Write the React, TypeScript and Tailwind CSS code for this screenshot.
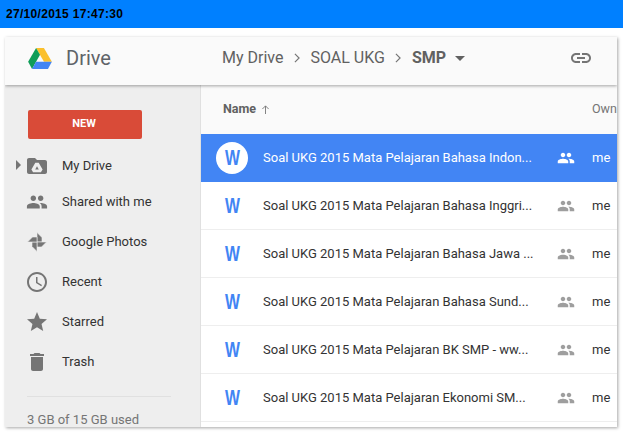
const ROBOTO = "font-['Roboto',sans-serif]";

const P = {
  people: "M16 11c1.66 0 2.99-1.34 2.99-3S17.66 5 16 5c-1.66 0-3 1.34-3 3s1.34 3 3 3zm-8 0c1.66 0 2.99-1.34 2.99-3S9.66 5 8 5C6.34 5 5 6.34 5 8s1.34 3 3 3zm0 2c-2.33 0-7 1.17-7 3.5V19h14v-2.5c0-2.33-4.67-3.5-7-3.5zm8 0c-.29 0-.62.02-.97.05 1.16.84 1.97 1.97 1.97 3.45V19h6v-2.5c0-2.33-4.67-3.5-7-3.5z",
  star: "M12 17.27L18.18 21l-1.64-7.03L22 9.24l-7.19-.61L12 2 9.19 8.63 2 9.24l5.46 4.73L5.82 21z",
  trash: "M6 19c0 1.1.9 2 2 2h8c1.1 0 2-.9 2-2V7H6v12zM19 4h-3.5l-1-1h-5l-1 1H5v2h14V4z",
  link: "M3.9 12c0-1.71 1.39-3.1 3.1-3.1h4V7H7c-2.76 0-5 2.24-5 5s2.24 5 5 5h4v-1.9H7c-1.71 0-3.1-1.39-3.1-3.1zM8 13h8v-2H8v2zm9-6h-4v1.9h4c1.71 0 3.1 1.39 3.1 3.1s-1.39 3.1-3.1 3.1h-4V17h4c2.76 0 5-2.24 5-5s-2.24-5-5-5z",
  clock: "M11.99 2C6.47 2 2 6.48 2 12s4.47 10 9.99 10C17.52 22 22 17.52 22 12S17.52 2 11.99 2zM12 20c-4.42 0-8-3.58-8-8s3.58-8 8-8 8 3.58 8 8-3.58 8-8 8zm.5-13H11v6l5.25 3.15.75-1.23-4.5-2.67z",
  folder: "M10 4H4c-1.1 0-2 .9-2 2v12c0 1.1.9 2 2 2h16c1.1 0 2-.9 2-2V8c0-1.1-.9-2-2-2h-8l-2-2z",
};

function Icon({ d, className }: { d: string; className: string }) {
  return (
    <svg viewBox="0 0 24 24" className={className} fill="currentColor">
      <path d={d} />
    </svg>
  );
}

function DriveLogo() {
  return (
    <svg viewBox="0 0 26 23" className="h-[21px] w-[24px]">
      <path d="M8.7 0h8.6l8.7 15h-8.600z" fill="#fbc02d" />
      <path d="M8.7 0l4.300 7.500L4.300 23 0 15z" fill="#0f9d58" />
      <path d="M8.600 15H26l-4.300 8H4.300z" fill="#4285f4" />
    </svg>
  );
}

function MyDriveIcon() {
  return (
    <svg viewBox="0 0 24 24" className="h-6 w-6 text-[#757575]">
      <path d={P.folder} fill="currentColor" />
      <path
        fillRule="evenodd"
        d="M10.300 8.800h3.400l3.900 6.600-1.700 2.800H8.100l-1.700-2.800zM12 12.200l-1.800 3.200h3.600z"
        fill="#eeeeee"
      />
    </svg>
  );
}

function PhotosIcon() {
  return (
    <svg viewBox="0 0 24 24" className="h-6 w-6 text-[#757575]" fill="currentColor" stroke="#eeeeee" strokeWidth="0.6">
      <path d="M12 12V2.500l5 5V12z" />
      <path d="M12 12h9.500l-5 5H12z" />
      <path d="M12 12v9.500l-5-5V12z" />
      <path d="M12 12H2.500l5-5H12z" />
    </svg>
  );
}

const nav = [
  { label: "Shared with me", icon: <span className="flex h-6 w-6 items-center justify-center"><Icon d={P.people} className="h-[22px] w-[22px] text-[#757575]" /></span> },
  { label: "Google Photos", icon: <PhotosIcon /> },
  { label: "Recent", icon: <Icon d={P.clock} className="h-6 w-6 text-[#757575]" /> },
  { label: "Starred", icon: <Icon d={P.star} className="h-6 w-6 text-[#757575]" /> },
  { label: "Trash", icon: <Icon d={P.trash} className="h-6 w-6 text-[#757575]" /> },
];

const rows = [
  "Soal UKG 2015 Mata Pelajaran Bahasa Indon...",
  "Soal UKG 2015 Mata Pelajaran Bahasa Inggri...",
  "Soal UKG 2015 Mata Pelajaran Bahasa Jawa ...",
  "Soal UKG 2015 Mata Pelajaran Bahasa Sund...",
  "Soal UKG 2015 Mata Pelajaran BK SMP - ww...",
  "Soal UKG 2015 Mata Pelajaran Ekonomi SM...",
];

function Chevron() {
  return (
    <svg viewBox="0 0 8 12" className="mx-[9.500px] h-[10px] w-[8px] text-[#757575]" fill="none" stroke="currentColor" strokeWidth="1.4">
      <path d="M1.500 1l5 5-5 5" />
    </svg>
  );
}

export default function App() {
  return (
    <div className="h-[433px] w-[623px] overflow-hidden bg-white">
      <div className="flex h-[28px] items-center bg-[#0080ff] pl-[6px] font-['Liberation_Sans',sans-serif] text-[12px] font-bold tracking-[0.3px] text-black">
        27/10/2015 17:47:30
      </div>
      <div className={`ml-[5px] mt-[9px] flex h-[390px] w-[612px] flex-col overflow-hidden bg-white shadow-[1px_1px_3px_rgba(0,0,0,0.35)] ${ROBOTO}`}>
        <header className="relative z-10 flex h-[48px] shrink-0 items-center bg-[#fafafa] pb-[6px] shadow-[0_1px_3px_rgba(0,0,0,0.35)]">
          <div className="flex w-[217px] shrink-0 items-center pl-[23px]">
            <DriveLogo />
            <span className="ml-[14px] text-[20px] text-[#5f6368]">Drive</span>
          </div>
          <div className="flex items-center text-[16px] text-[#616161]">
            <span>My Drive</span>
            <Chevron />
            <span>SOAL UKG</span>
            <Chevron />
            <span className="font-bold">SMP</span>
            <svg viewBox="0 0 10 5" className="ml-[9px] h-[5px] w-[10px] text-[#616161]" fill="currentColor">
              <path d="M0 0h10L5 5z" />
            </svg>
          </div>
          <Icon d={P.link} className="ml-auto mr-[24px] h-6 w-6 text-[#757575]" />
        </header>
        <div className="flex min-h-0 flex-1">
          <aside className="flex w-[196px] shrink-0 flex-col border-r border-[#e0e0e0] bg-[#eeeeee] pt-[25px]">
            <button className="ml-[23px] flex h-[29px] w-[114px] shrink-0 items-center justify-center rounded-[2px] bg-[#d94b38] pr-[2px] text-[11px] font-bold text-white">
              NEW
            </button>
            <div className="relative mt-[11px] flex h-[32px] shrink-0 items-center pl-[20px] text-[13px] text-[#333]">
              <span className="absolute left-[11px] top-[10px] h-0 w-0 border-y-[5px] border-l-[5px] border-y-transparent border-l-[#757575]" />
              <MyDriveIcon />
              <span className="ml-[13px]">My Drive</span>
            </div>
            {nav.map((n) => (
              <div key={n.label} className="flex h-10 shrink-0 items-center pl-[20px] text-[13px] text-[#333]">
                {n.icon}
                <span className="ml-[13px]">{n.label}</span>
              </div>
            ))}
            <div className="ml-[22px] mt-[14px] h-px w-[144px] shrink-0 bg-[#e0e0e0]" />
            <div className="ml-[22px] mt-[14px] shrink-0 text-[13px] leading-[18px] text-[#757575]">3 GB of 15 GB used</div>
          </aside>
          <main className="min-w-0 flex-1 bg-white">
            <div className="flex h-[49px] items-center bg-[#fafafa] text-[12.500px]">
              <span className="ml-[22px] font-bold text-[#616161]">Name</span>
              <svg viewBox="0 0 10 10" className="ml-[5px] h-[9px] w-[9px] text-[#757575]" fill="none" stroke="currentColor">
                <path d="M5 10V1M1.500 4.500L5 1l3.500 3.500" />
              </svg>
              <span className="ml-auto w-[25px] whitespace-nowrap text-[#757575]">Own</span>
            </div>
            {rows.map((r, i) => (
              <div
                key={r}
                className={`flex h-[48px] items-center text-[13px] ${i === 0 ? "bg-[#4285f4] text-white" : "border-b border-[#eeeeee] text-[#333]"}`}
              >
                <div className="flex w-[62px] shrink-0 justify-center">
                  <span
                    className={`flex items-center justify-center font-['Liberation_Sans',sans-serif] text-[22px] font-bold leading-none text-[#4285f4] ${i === 0 ? "h-[32px] w-[32px] rounded-full bg-white" : ""}`}
                  >
                    <span className="inline-block scale-x-[0.72]">W</span>
                  </span>
                </div>
                <span className={`w-[294px] shrink-0 whitespace-nowrap ${i === 0 ? "" : "pt-px"}`}>{r}</span>
                <Icon d={P.people} className={`h-[18px] w-[18px] shrink-0 ${i === 0 ? "text-white" : "text-[#9e9e9e]"}`} />
                <span className={`ml-[17px] ${i === 0 ? "" : "pt-px"}`}>me</span>
              </div>
            ))}
          </main>
        </div>
      </div>
    </div>
  );
}
